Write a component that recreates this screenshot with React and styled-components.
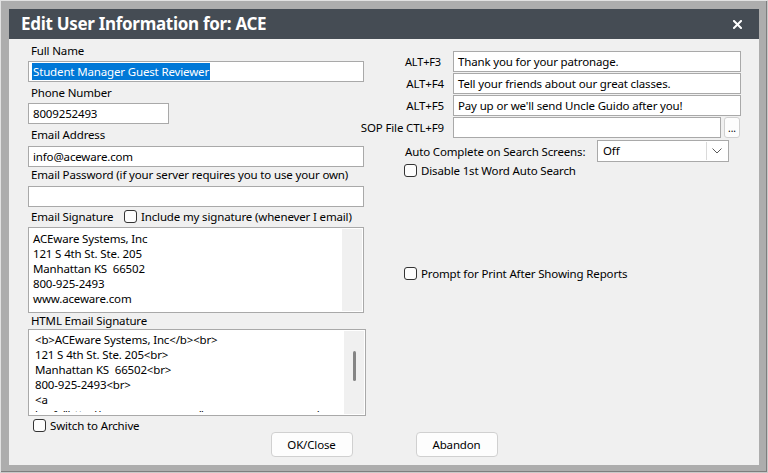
import React from 'react'
import styled, { createGlobalStyle } from 'styled-components'

const font = `'Noto Sans', 'Segoe UI', 'Liberation Sans', sans-serif`

const GlobalStyle = createGlobalStyle`
  html, body {
    margin: 0;
    padding: 0;
    background: #adadad;
  }
  body {
    font-family: ${font};
    font-size: 11.5px;
    letter-spacing: -0.15px;
    color: #000;
  }
`

const Frame = styled.div`
  box-sizing: border-box;
  width: 768px;
  height: 473px;
  padding: 8px 8px 7px 8px;
  background: #adadad;
  border: 1px solid #c9c9c9;
  border-top-color: #e2e2e2;
  border-left-color: #e2e2e2;
  box-shadow: inset -1px -1px 0 #7e7e7e;
  display: flex;
`

const Dialog = styled.div`
  flex: 1;
  display: flex;
  flex-direction: column;
  background: #f0f0f0;
`

const TitleBar = styled.div`
  height: 30px;
  flex: none;
  display: flex;
  align-items: center;
  justify-content: space-between;
  padding: 0 17px 0 12px;
  background: #454c54;
  color: #fff;
`

const Title = styled.h1`
  margin: 0;
  font-size: 17px;
  font-weight: 700;
  letter-spacing: -0.3px;
  line-height: 30px;
`

const CloseIcon = () => (
  <svg width="9" height="9" viewBox="0 0 9 9">
    <path d="M1 1 L8 8 M8 1 L1 8" stroke="#fff" strokeWidth="2" strokeLinecap="square" />
  </svg>
)

const Body = styled.div`
  display: flex;
  gap: 38px;
  padding: 4px 18px 0 19px;
`

const LeftCol = styled.div`
  width: 338px;
  flex: none;
  display: flex;
  flex-direction: column;
`

const RightCol = styled.div`
  flex: 1;
  display: flex;
  flex-direction: column;
  padding-top: 8px;
`

const Label = styled.div`
  height: 16px;
  line-height: 16px;
  padding-left: 3px;
  margin-top: ${p => p.$mt || 0}px;
  margin-bottom: ${p => p.$mb || 0}px;
  white-space: nowrap;
`

const Box = styled.div`
  box-sizing: border-box;
  width: ${p => p.$w || 336}px;
  height: 21px;
  line-height: 19px;
  padding: 0 4px;
  background: #fff;
  border: 1px solid #a9a9a9;
  white-space: nowrap;
  overflow: hidden;
`

const Selected = styled.span`
  background: #0078d7;
  color: #fff;
  margin-left: -1px;
  padding: 1px 1px;
`

const Area = styled.div`
  box-sizing: border-box;
  width: ${p => p.$w}px;
  height: ${p => p.$h}px;
  display: flex;
  padding: 1px;
  background: #fff;
  border: 1px solid #a9a9a9;
`

const AreaText = styled.div`
  flex: 1;
  overflow: hidden;
  padding: ${p => p.$pad};
  margin-bottom: ${p => p.$clip || 0}px;
  line-height: 15px;
  white-space: pre;
`

const Track = styled.div`
  width: 20px;
  flex: none;
  background: #f0f0f0;
  display: flex;
  justify-content: center;
`

const Thumb = styled.div`
  width: 3px;
  height: 30px;
  margin-top: 20px;
  border-radius: 2px;
  background: #858585;
`

const CheckRow = styled.div`
  display: flex;
  align-items: center;
  gap: 4px;
  height: ${p => p.$h || 14}px;
  margin-top: ${p => p.$mt || 0}px;
  margin-left: ${p => p.$ml || 0}px;
  white-space: nowrap;
`

const Check = styled.span`
  box-sizing: border-box;
  width: 13px;
  height: 13px;
  flex: none;
  border: 1px solid #333;
  border-radius: 3px;
  background: #fdfdfd;
`

const SigHeader = styled.div`
  display: flex;
  align-items: center;
  height: 16px;
  margin-top: 1px;
  margin-bottom: 3px;
`

const SigLabel = styled.span`
  width: 93px;
  padding-left: 3px;
  flex: none;
`

const KeyRow = styled.div`
  display: flex;
  align-items: center;
  height: 21px;
  margin-bottom: 1px;
`

const KeyLabel = styled.div`
  width: 40px;
  flex: none;
  display: flex;
  justify-content: flex-end;
  margin-right: 9px;
  padding-right: ${p => p.$pr || 0}px;
  box-sizing: border-box;
  white-space: nowrap;
  font-size: ${p => p.$size || 11.5}px;
`

const KeyBox = styled(Box)`
  width: auto;
  flex: 1;
`

const DotsButton = styled.div`
  box-sizing: border-box;
  width: 16px;
  height: 21px;
  margin: 0 1px 0 3px;
  flex: none;
  border: 1px solid #d0d0d0;
  border-radius: 3px;
  background: #fdfdfd;
  font-size: 10px;
  letter-spacing: 0;
  line-height: 21px;
  text-align: center;
`

const AutoRow = styled.div`
  display: flex;
  align-items: center;
  height: 22px;
  margin-top: 1px;
  padding-left: 1px;
`

const AutoLabel = styled.div`
  width: 192px;
  flex: none;
  white-space: nowrap;
`

const Select = styled.div`
  box-sizing: border-box;
  width: 132px;
  height: 22px;
  display: flex;
  align-items: stretch;
  padding: 1px;
  background: #fff;
  border: 1px solid #a9a9a9;
`

const SelectValue = styled.div`
  flex: 1;
  padding-left: 4px;
  line-height: 18px;
`

const ArrowBox = styled.div`
  width: 20px;
  flex: none;
  display: flex;
  align-items: center;
  justify-content: center;
  border-left: 1px solid #dadada;
`

const Chevron = () => (
  <svg width="10" height="6" viewBox="0 0 10 6">
    <path d="M0.5 0.5 L5 5 L9.5 0.5" fill="none" stroke="#5a5a5a" strokeWidth="1" />
  </svg>
)

const Footer = styled.div`
  display: flex;
  justify-content: center;
  gap: 63px;
`

const Button = styled.div`
  box-sizing: border-box;
  width: 82px;
  height: 25px;
  line-height: 23px;
  text-align: center;
  background: #fdfdfd;
  border: 1px solid #d0d0d0;
  border-radius: 4px;
`

const signature = `ACEware Systems, Inc
121 S 4th St. Ste. 205
Manhattan KS  66502
800-925-2493
www.aceware.com`

const htmlSignature = `<b>ACEware Systems, Inc</b><br>
121 S 4th St. Ste. 205<br>
Manhattan KS  66502<br>
800-925-2493<br>
<a
href="http://www.aceware.com">www.aceware.com</a>`

const hotkeys = [
  { key: 'ALT+F3', text: 'Thank you for your patronage.', size: 11, pr: 3 },
  { key: 'ALT+F4', text: 'Tell your friends about our great classes.' },
  { key: 'ALT+F5', text: "Pay up or we'll send Uncle Guido after you!" },
]

export default function App() {
  return (
    <>
      <GlobalStyle />
      <Frame>
        <Dialog>
          <TitleBar>
            <Title>Edit User Information for: ACE</Title>
            <CloseIcon />
          </TitleBar>
          <Body>
            <LeftCol>
              <Label $mb={2}>Full Name</Label>
              <Box>
                <Selected>Student Manager Guest Reviewer</Selected>
              </Box>
              <Label $mt={3} $mb={2}>Phone Number</Label>
              <Box $w={141}>8009252493</Box>
              <Label $mt={3} $mb={3}>Email Address</Label>
              <Box>info@aceware.com</Box>
              <Label $mb={3}>Email Password (if your server requires you to use your own)</Label>
              <Box />
              <SigHeader>
                <SigLabel>Email Signature</SigLabel>
                <CheckRow $h={16}>
                  <Check />
                  Include my signature (whenever I email)
                </CheckRow>
              </SigHeader>
              <Area $w={336} $h={86}>
                <AreaText $pad="2px 3px">{signature}</AreaText>
                <Track />
              </Area>
              <Label>HTML Email Signature</Label>
              <Area $w={338} $h={87}>
                <AreaText $pad="1px 5px" $clip={2}>{htmlSignature}</AreaText>
                <Track>
                  <Thumb />
                </Track>
              </Area>
              <CheckRow $h={13} $mt={3} $ml={5}>
                <Check />
                Switch to Archive
              </CheckRow>
            </LeftCol>
            <RightCol>
              {hotkeys.map(h => (
                <KeyRow key={h.key}>
                  <KeyLabel $size={h.size} $pr={h.pr}>{h.key}</KeyLabel>
                  <KeyBox>{h.text}</KeyBox>
                </KeyRow>
              ))}
              <KeyRow>
                <KeyLabel>SOP File CTL+F9</KeyLabel>
                <KeyBox />
                <DotsButton>...</DotsButton>
              </KeyRow>
              <AutoRow>
                <AutoLabel>Auto Complete on Search Screens:</AutoLabel>
                <Select>
                  <SelectValue>Off</SelectValue>
                  <ArrowBox>
                    <Chevron />
                  </ArrowBox>
                </Select>
              </AutoRow>
              <CheckRow $mt={1}>
                <Check />
                Disable 1st Word Auto Search
              </CheckRow>
              <CheckRow $mt={89}>
                <Check />
                Prompt for Print After Showing Reports
              </CheckRow>
            </RightCol>
          </Body>
          <Footer>
            <Button>OK/Close</Button>
            <Button>Abandon</Button>
          </Footer>
        </Dialog>
      </Frame>
    </>
  )
}
